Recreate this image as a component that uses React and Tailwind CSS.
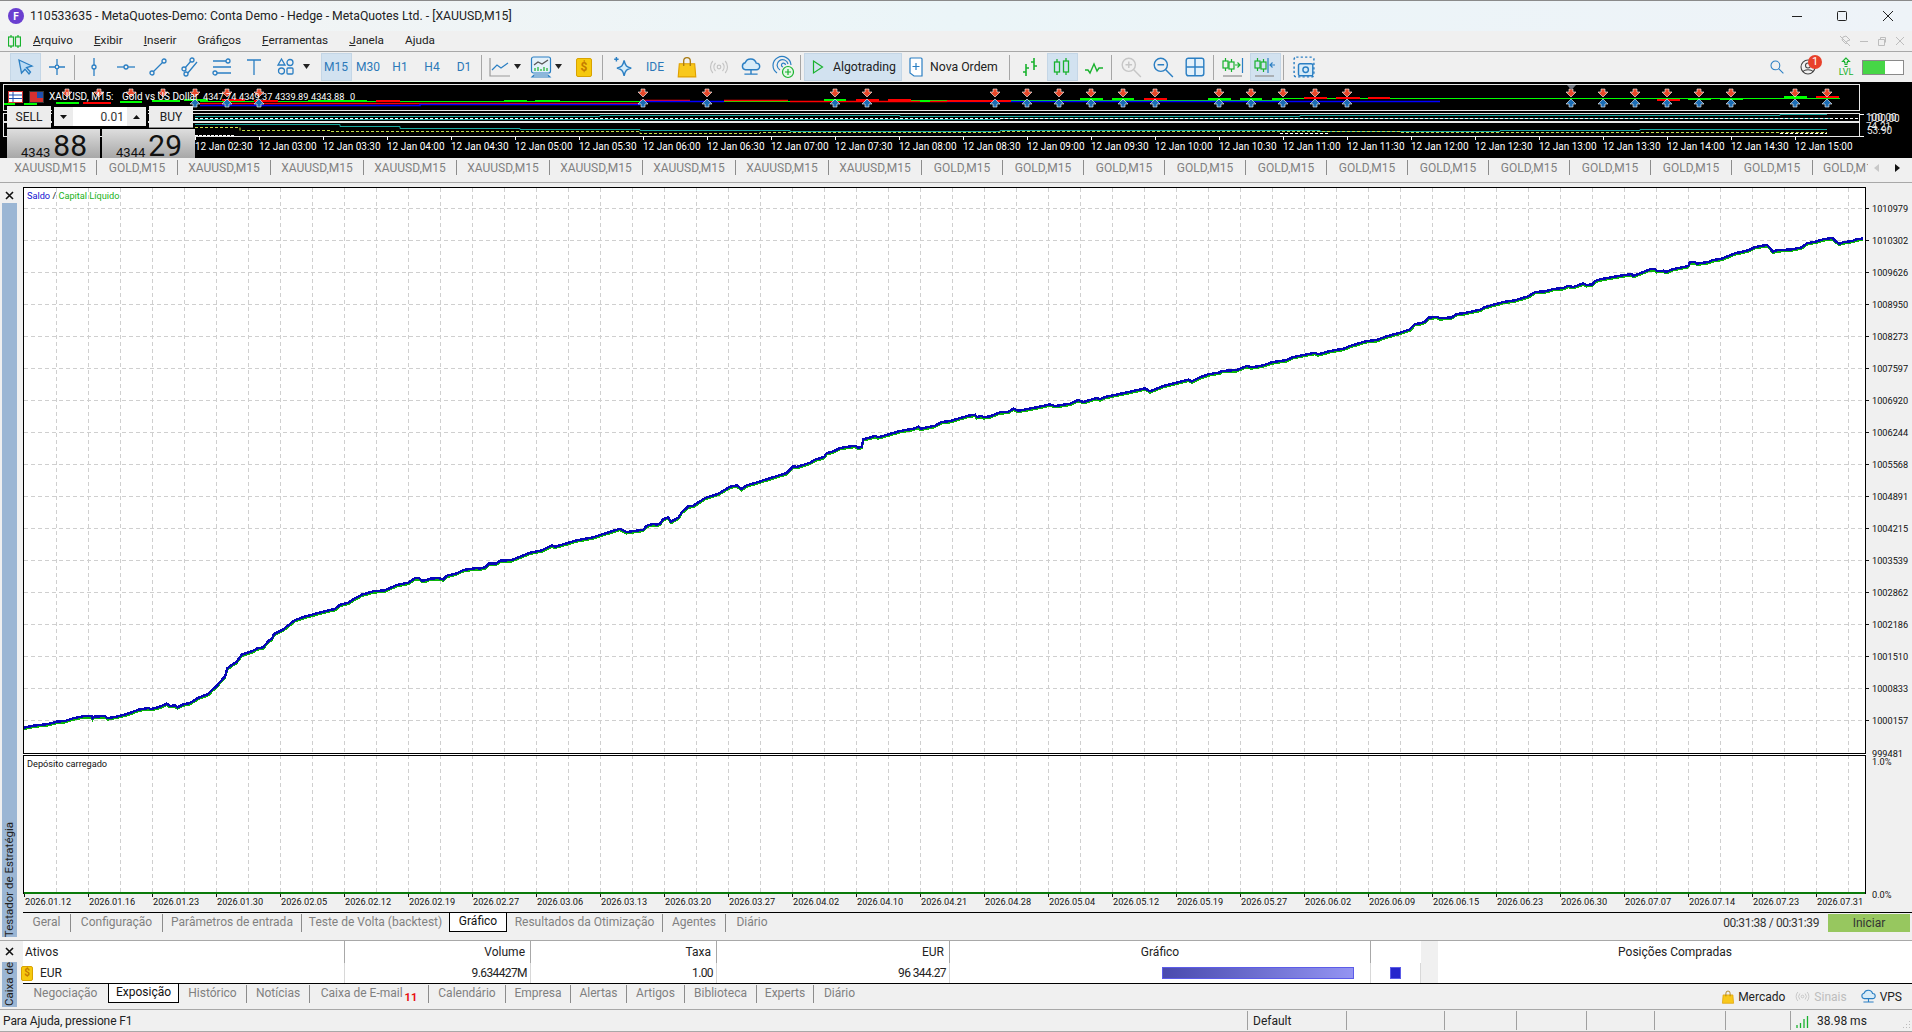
import React from 'react';

const BLUE = '#2b7fc3';
const GREEN = '#19b22e';

const Ico = ({ children, s = 20, stroke = BLUE, sw = 1.3 }) => (
  <svg width={s} height={s} viewBox="0 0 20 20" fill="none" stroke={stroke} strokeWidth={sw}>
    {children}
  </svg>
);

const Dot = ({ x, y, r = 2 }) => <circle cx={x} cy={y} r={r} fill="#f0f0f0" />;

const Caret = () => (
  <svg width="10" height="6" viewBox="0 0 10 6"><path d="M1 0h7L4.500 5z" fill="#222" /></svg>
);

const Sep = () => <div className="w-px h-[25px] bg-[#a6a6a6] mx-[1px] shrink-0" />;

const Slot = ({ active, children, w = 'w-[32px]' }) => (
  <div className={`${w} h-[28px] shrink-0 flex items-center justify-center`}>
    <div className={`h-[26px] min-w-[29px] flex items-center justify-center ${active ? 'bg-[#d2e2f0] outline outline-1 outline-[#c4d6e6]' : ''}`}>
      {children}
    </div>
  </div>
);

const DollarBadge = ({ s = 'w-[16px] h-[19px]', t = 'text-[12px]' }) => (
  <div className={`${s} ${t} rounded-[2px] bg-[#f6c90e] border border-[#d9a300] text-[#c47a00] font-bold flex items-center justify-center leading-none shrink-0`}>$</div>
);

const Bag = ({ s = 20 }) => (
  <svg width={s} height={s} viewBox="0 0 20 20">
    <path d="M3 7h14l1 12H2z" fill="#f8c81c" stroke="#e0a000" />
    <path d="M7 9V4.500a3 3 0 0 1 6 0V9" fill="none" stroke="#a87a10" strokeWidth="1.2" />
  </svg>
);

const Signal = ({ s = 20 }) => (
  <svg width={s} height={s} viewBox="0 0 20 20" fill="none" stroke="#c4c4c4" strokeWidth="1.2">
    <circle cx="10" cy="10" r="1.8" />
    <path d="M6.500 6a6 6 0 0 0 0 8M13.500 6a6 6 0 0 1 0 8M3.800 4a9 9 0 0 0 0 12M16.200 4a9 9 0 0 1 0 12" />
  </svg>
);

const Cloud = ({ s = 20 }) => (
  <Ico s={s}>
    <path d="M5 12.500a3.200 3.200 0 0 1-.3-6.300 5.300 5.300 0 0 1 10.100.3 3 3 0 0 1 .2 6z" fill="#d8ecf8" />
    <path d="M10 12.500v4M4 16.500h12" />
  </Ico>
);

const Candle = ({ x, y1, y2, b1, b2, c = GREEN }) => (
  <g stroke={c} fill="none">
    <path d={`M${x} ${y1}V${b1}M${x} ${b2}V${y2}`} />
    <rect x={x - 2.5} y={b1} width="5" height={b2 - b1} />
  </g>
);

const Scroll = ({ left }) => (
  <svg width="22" height="22" viewBox="0 0 22 22" fill="none" strokeWidth="1.2">
    {left ? (
      <>
        <Candle x={3.5} y1={2} y2={15} b1={5} b2={12} />
        <Candle x={9.5} y1={3} y2={16} b1={6} b2={13} />
        <path d="M14 2v15" stroke={BLUE} />
        <path d="M21 9h-5M18.500 6.500L16 9l2.500 2.500" stroke={BLUE} />
      </>
    ) : (
      <>
        <Candle x={3.5} y1={2} y2={15} b1={5} b2={12} />
        <Candle x={9.5} y1={3} y2={16} b1={6} b2={13} />
        <path d="M13 9h5M15.500 6.500L18 9l-2.500 2.500" stroke={GREEN} />
        <path d="M20.500 2v15" stroke={BLUE} />
      </>
    )}
    <path d="M1 20h19" stroke="#9a9a9a" strokeWidth="1.4" />
  </svg>
);

const Toolbar = () => (
  <div className="h-[31px] shrink-0 border-t border-[#a8a8a8] flex items-center pl-[9px]">
    <Slot active>
      <Ico><path d="M4 3l13 6-5.500 1.500L15.500 15 14 17l-4-4.800L6.500 16z" fill="#bcdcf4" /></Ico>
    </Slot>
    <Slot>
      <Ico><circle cx="10" cy="10" r="1.8" /><path d="M10 2v6M10 12v6M2 10h6M12 10h6" /></Ico>
    </Slot>
    <Sep />
    <div className="w-[2px] shrink-0" />
    <Slot><Ico><path d="M10 1v18" /><Dot x={10} y={10} /></Ico></Slot>
    <Slot><Ico><path d="M1 10h18" /><Dot x={10} y={10} /></Ico></Slot>
    <Slot><Ico><path d="M5 15L15 5" /><Dot x={4} y={16} /><Dot x={16} y={4} /></Ico></Slot>
    <Slot><Ico><path d="M5 11l6-7M7 17l10-12" /><Dot x={4} y={12} /><Dot x={12} y={3} /><Dot x={6} y={17} /></Ico></Slot>
    <Slot><Ico><path d="M1 4h13M1 10h18M5 16h14" /><Dot x={16} y={4} /><Dot x={3} y={16} /></Ico></Slot>
    <Slot><Ico><path d="M3 3h14M10 3v15" /></Ico></Slot>
    <Slot>
      <Ico><path d="M5.500 2l3.500 6H2z" /><circle cx="14" cy="5.500" r="3" /><circle cx="5.500" cy="14" r="3" /><rect x="11" y="11" width="6" height="6" rx="1" /></Ico>
    </Slot>
    <div className="w-[10px] shrink-0 flex justify-center"><Caret /></div>
    <div className="w-[8px] shrink-0" />
    {['M15', 'M30', 'H1', 'H4', 'D1'].map((t, i) => (
      <Slot key={t} active={i === 0}>
        <span className="text-[#2b78b8] text-[12px]">{t}</span>
      </Slot>
    ))}
    <Sep />
    <div className="w-[4px] shrink-0" />
    <div className="w-[26px] shrink-0 flex justify-center">
      <svg width="22" height="22" viewBox="0 0 22 22" fill="none" strokeWidth="1.2">
        <path d="M1 2v18h20" stroke="#9a9a9a" />
        <path d="M3 14l5-5 4 3 7-5" stroke={BLUE} />
      </svg>
    </div>
    <div className="w-[10px] shrink-0 flex justify-center"><Caret /></div>
    <div className="w-[6px] shrink-0" />
    <div className="w-[24px] shrink-0 flex justify-center">
      <svg width="22" height="24" viewBox="0 0 22 24" fill="none" strokeWidth="1.2">
        <path d="M4 20h14l2 2H2z" stroke={BLUE} />
        <rect x="1.500" y="2" width="19" height="16" rx="2" stroke={BLUE} fill="#e4f1fa" />
        <path d="M4 10l4-3 4 2 6-4" stroke="#555" />
        <path d="M5 16v-3M8 16v-4M11 16v-2M14 16v-4M17 16v-3" stroke={GREEN} />
      </svg>
    </div>
    <div className="w-[10px] shrink-0 flex justify-center ml-[1px]"><Caret /></div>
    <div className="w-[12px] shrink-0" />
    <DollarBadge />
    <div className="w-[9px] shrink-0" />
    <Sep />
    <div className="w-[3px] shrink-0" />
    <Slot>
      <Ico s={22}><path d="M11 4c1 5 2.500 6 6.500 7-4 1-5.500 2-6.500 7-1-5-2.500-6-6.500-7 4-1 5.500-2 6.500-7z" fill="#d4ecfa" /><path d="M4 1v4M2 3h4" /></Ico>
    </Slot>
    <Slot><span className="text-[#2b78b8] text-[12px]">IDE</span></Slot>
    <Slot><Bag s={22} /></Slot>
    <Slot><Signal /></Slot>
    <Slot><Cloud s={22} /></Slot>
    <Slot>
      <svg width="24" height="24" viewBox="0 0 24 24" fill="none" strokeWidth="1.2" stroke={BLUE}>
        <path d="M6 18a9 9 0 1 1 14-8M9 15a5.500 5.500 0 1 1 8-6M12 12a2 2 0 1 1 2.500-2" />
        <circle cx="17" cy="17" r="5.500" fill="#e6f8e8" stroke={GREEN} />
        <path d="M17 14v6M14 17h6" stroke={GREEN} />
      </svg>
    </Slot>
    <Sep />
    <div className="w-[3px] shrink-0" />
    <div className="w-[96px] h-[26px] shrink-0 bg-[#d2e2f0] outline outline-1 outline-[#c4d6e6] flex items-center pl-[7px] gap-[9px] text-[12.25px] text-[#222]">
      <svg width="12" height="16" viewBox="0 0 12 16" fill="none" stroke={GREEN} strokeWidth="1.2"><path d="M1.500 2l9 6-9 6z" /></svg>
      <span>Algotrading</span>
    </div>
    <div className="w-[8px] shrink-0" />
    <div className="w-[99px] h-[26px] shrink-0 flex items-center gap-[7px] text-[12.25px] text-[#222]">
      <svg width="14" height="20" viewBox="0 0 14 20" fill="#fff" stroke={BLUE} strokeWidth="1.2"><path d="M2 1h10a1 1 0 0 1 1 1v17H5l-4-3V2a1 1 0 0 1 1-1z" /><path d="M7 6v7M3.500 9.500h7" /></svg>
      <span>Nova Ordem</span>
    </div>
    <Sep />
    <div className="w-[3px] shrink-0" />
    <Slot>
      <Ico stroke={GREEN} sw={1.6}><path d="M6 7v12M3 15h3M6 11h3M14 1v12M11 5h3M14 9h3" /></Ico>
    </Slot>
    <Slot active>
      <svg width="20" height="20" viewBox="0 0 20 20" strokeWidth="1.3"><Candle x={5} y1={2} y2={18} b1={5} b2={15} /><Candle x={14} y1={1} y2={18} b1={4} b2={15} /></svg>
    </Slot>
    <Slot><Ico stroke={GREEN} sw={1.4}><path d="M1 13h3l2 3 4-9 3 7 2-3h4" /></Ico></Slot>
    <Sep />
    <div className="w-[2px] shrink-0" />
    <Slot><Ico stroke="#c6c6c6" s={22}><circle cx="8" cy="8" r="6" /><path d="M12.500 12.500L19 19M5 8h6M8 5v6" /></Ico></Slot>
    <Slot><Ico s={22}><circle cx="8" cy="8" r="6" /><path d="M12.500 12.500L19 19M5 8h6" /></Ico></Slot>
    <Slot><Ico s={22}><rect x="2" y="2" width="16" height="16" rx="2" fill="#e4f1fa" /><path d="M10 2v16M2 10h16" /></Ico></Slot>
    <div className="w-px shrink-0" />
    <Sep />
    <div className="w-[2px] shrink-0" />
    <Slot><Scroll /></Slot>
    <Slot active><Scroll left /></Slot>
    <div className="w-px shrink-0" />
    <Sep />
    <div className="w-[3px] shrink-0" />
    <Slot>
      <Ico s={22}>
        <rect x="1" y="1" width="18" height="18" rx="2" strokeDasharray="2 2" />
        <rect x="5" y="7" width="13" height="11" rx="1.500" fill="#d8ecf8" />
        <circle cx="11.500" cy="12.500" r="2.500" />
      </Ico>
    </Slot>
    <div className="flex-1" />
    <div className="w-[22px] flex justify-center">
      <Ico s={16}><circle cx="8" cy="8" r="5.500" /><path d="M12 12l6 6" /></Ico>
    </div>
    <div className="w-[9px]" />
    <div className="w-[22px] h-[28px] relative flex items-center justify-center">
      <svg width="16" height="16" viewBox="0 0 16 16" fill="none" stroke="#444" strokeWidth="1.1"><circle cx="8" cy="8" r="7" /><circle cx="8" cy="6.500" r="2.500" /><path d="M3 13c1-3 9-3 10 0" /></svg>
      <span className="absolute left-[11px] top-[2px] w-[14px] h-[14px] rounded-full bg-[#e8402a] text-white text-[11px] leading-[14px] text-center">1</span>
    </div>
    <div className="w-[19px]" />
    <div className="w-[16px] flex flex-col items-center leading-none">
      <svg width="10" height="10" viewBox="0 0 10 10" fill="none" stroke={GREEN} strokeWidth="1.1"><path d="M5 1L1.500 4.500H3.500V6H6.500V4.500H8.500zM3.500 7.500h3M3.500 9.500h3" /></svg>
      <span className="text-[9px] text-[#19b22e] leading-[10px]">LVL</span>
    </div>
    <div className="w-[8px]" />
    <div className="w-[42px] h-[15px] border border-[#8a8a8a] bg-white flex mr-[8px]">
      <div className="w-[22px] bg-[#46d646]" />
    </div>
  </div>
);

const stripTimes = ['02:30','03:00','03:30','04:00','04:30','05:00','05:30','06:00','06:30','07:00','07:30','08:00','08:30','09:00','09:30','10:00','10:30','11:00','11:30','12:00','12:30','13:00','13:30','14:00','14:30','15:00'];
const marks = [67,99,131,163,195,227,259,643,707,835,867,995,1027,1059,1091,1123,1155,1219,1251,1283,1315,1347,1571,1603,1635,1667,1699,1731,1795,1827];
const greenBars = [[4,11,103],[24,13,103],[56,23,102],[120,22,101],[152,28,100],[184,24,99],[308,59,100],[504,23,100],[535,25,100],[824,22,99],[920,10,100],[1080,23,98],[1112,22,98],[1208,23,98],[1240,22,98],[1272,10,98],[1688,23,98],[1720,23,98],[1784,23,96]];
const redBars = [[83,28,102],[222,23,99],[254,24,100],[376,24,100],[856,23,99],[888,23,99],[947,64,100],[1144,23,98],[1304,23,97],[1336,24,97],[1368,22,97],[1657,23,99],[1816,23,96]];
const ohlc = [['4347.74', 203], ['4349.37', 239], ['4339.89', 275], ['4343.88', 311], ['0', 350]];

const Strip = () => (
  <div className="h-[76px] shrink-0 bg-black relative overflow-hidden">
    <svg width="1912" height="76" viewBox="0 82 1912 76" className="block" style={{ fontFamily: 'Roboto, sans-serif' }}>
      <rect x="3.500" y="84.500" width="1856" height="26" fill="none" stroke="#e8e8e8" />
      <rect x="3.500" y="113.500" width="1856" height="8" fill="none" stroke="#e8e8e8" />
      <rect x="3.500" y="122.500" width="1856" height="14" fill="none" stroke="#e8e8e8" />
      <path d="M200 101.500H900V100.500H1280V98.500H1840" stroke="#00ff00" fill="none" />
      <path d="M200 103.500H640M640 100.500H690M724 100.500H788M790 101.500H947" stroke="#ff0000" fill="none" strokeWidth="1.500" />
      <path d="M200 105.500H420V104.500H640M640 101.500H724M947 101.500H1440" stroke="#0000ff" fill="none" strokeWidth="1.500" />
      {greenBars.map(([x, w, y]) => <rect key={x} x={x} y={y} width={w} height="2" fill="#00ff00" />)}
      {redBars.map(([x, w, y]) => <rect key={x} x={x} y={y} width={w} height="2" fill="#ff0000" />)}
      <path d="M195 116.500H600V115.500H900V116.500H1300V115.500H1780V114.500H1827" stroke="#19a8a0" fill="none" />
      <path d="M195 119.500H1000V118.500H1830" stroke="#19a8a0" fill="none" />
      <path d="M195 118.500H1858" stroke="#fff" fill="none" strokeDasharray="3 2" />
      <path d="M195 124.500H340V126.500H400V128.500H520V129.500H640V130.500H790V131.500H1000V130.500H1320V131.500H1500V130.500H1640V129.500H1827" stroke="#19a8a0" fill="none" />
      <path d="M195 127.500H240V130.500H330V131.500H640V133.500H760V132.500H1000V131.500H1400V132.500H1827" stroke="#c8e04a" fill="none" strokeDasharray="3 2" />
      <path d="M195 135.500H235" stroke="#fff" fill="none" strokeDasharray="3 1" />
      <path d="M1280 133.500H1330M1780 133.500H1827" stroke="#fff" fill="none" strokeDasharray="3 2" />
      {marks.map((x) => (
        <path key={x} d={`M${x - 2} 89h4v3h3l-5 5-5-5h3z`} fill="#e8482a" stroke="#fff" strokeWidth="0.6" />
      ))}
      {marks.filter((x) => x >= 195).map((x) => (
        <path key={x} d={`M${x} 99l5 5h-3v3h-4v-3h-3z`} fill="#1c6db4" stroke="#fff" strokeWidth="0.6" />
      ))}
      <path d="M1567 85h9l-4.500 5z" fill="#707680" />
      {stripTimes.map((t, i) => (
        <g key={t}>
          <path d={`M${195.500 + 64 * i} 137v3`} stroke="#fff" />
          <text x={195 + 64 * i} y="150" fontSize="10" fill="#fff">12 Jan {t}</text>
        </g>
      ))}
      <path d="M1860 114.500h4M1860 136.500h4" stroke="#fff" />
      <text x="1866" y="121" fontSize="10" fill="#e8e8e8">100.00</text>
      <text x="1869" y="122" fontSize="10" fill="#e8e8e8">100.00</text>
      <text x="1866" y="130" fontSize="10" fill="#e8e8e8">74.21</text>
      <text x="1867" y="134" fontSize="10" fill="#e8e8e8">53.90</text>
      <text x="49" y="100" fontSize="10" fill="#fff">XAUUSD, M15:</text>
      <text x="122" y="100" fontSize="10" fill="#fff">Gold vs US Dollar</text>
      {ohlc.map(([t, x]) => <text key={t} x={x} y="100" fontSize="9.200" fill="#fff">{t}</text>)}
      <rect x="8.500" y="91.500" width="14" height="11" fill="#fff" stroke="#d03030" />
      <path d="M9 95h13M9 98.500h13M13 92v10" stroke="#2050b0" />
      <rect x="29.500" y="91.500" width="14" height="11" fill="#d83030" stroke="#333" />
      <rect x="37" y="92" width="6" height="6" fill="#2050b0" />
    </svg>
    <div className="absolute left-[6px] top-[23px] w-[189px] h-[53px]">
      <div className="flex h-[24px]">
        <div className="w-[44px] h-[22px] mt-[1px] ml-[1px] bg-[#ececec] border-b border-[#8a8a8a] text-[12px] text-[#222] flex items-center justify-center">SELL</div>
        <div className="w-[96px] h-[23px] ml-[1px] bg-white border-[2px] border-black flex items-center text-[12px] text-[#333]">
          <div className="w-[19px] h-full bg-[#ececec] flex items-center justify-center">
            <svg width="7" height="4" viewBox="0 0 7 4"><path d="M0 0h7L3.500 4z" fill="#111" /></svg>
          </div>
          <div className="flex-1 text-right pr-[3px]">0.01</div>
          <div className="w-[19px] h-full bg-[#ececec] flex items-center justify-center">
            <svg width="7" height="4" viewBox="0 0 7 4"><path d="M0 4h7L3.500 0z" fill="#111" /></svg>
          </div>
        </div>
        <div className="w-[44px] h-[22px] mt-[1px] ml-[1px] bg-[#ececec] border-b border-[#8a8a8a] text-[12px] text-[#222] flex items-center justify-center">BUY</div>
      </div>
      <div className="flex gap-[2px] ml-[1px] h-[29px]">
        {[['4343', '88'], ['4344', '29']].map(([a, b]) => (
          <div key={a} className="w-[93px] h-[29px] bg-gradient-to-b from-[#dedede] to-[#a8a8a8] overflow-hidden flex items-end justify-end pr-[13px] gap-[3px] text-[#111]">
            <span className="text-[13px] leading-[16px] mb-[-3px]">{a}</span>
            <span className="text-[30px] leading-[30px] mb-[-3px]">{b}</span>
          </div>
        ))}
      </div>
    </div>
  </div>
);

const chartTabs = [
  ['XAUUSD,M15', 'w-[97px] pl-[4px]'],
  ['GOLD,M15', 'w-[81px]'],
  ...Array.from({ length: 8 }, () => ['XAUUSD,M15', 'w-[93px]']),
  ...Array.from({ length: 11 }, () => ['GOLD,M15', 'w-[81px]']),
];

const ChartTabs = () => (
  <div className="h-[24px] shrink-0 flex items-start pt-[2px] relative overflow-hidden text-[#808080] text-[12px] whitespace-nowrap">
    <div className="flex items-center w-[1868px] overflow-hidden shrink-0">
      {chartTabs.map(([t, w], i) => (
        <div key={i} className={`${w} h-[15px] shrink-0 border-r border-[#8c8c8c] flex items-center justify-center leading-none`}>{t}</div>
      ))}
      <div className="shrink-0 pl-[10px] leading-none">GOLD,M15</div>
    </div>
    <div className="flex-1 h-[15px] flex justify-end gap-[16px] pr-[12px] items-center">
      <svg width="5" height="8" viewBox="0 0 5 8"><path d="M5 0v8L0 4z" fill="#c8c8c8" /></svg>
      <svg width="5" height="8" viewBox="0 0 5 8"><path d="M0 0v8l5-4z" fill="#111" /></svg>
    </div>
  </div>
);

const yLabels = [1010979,1010302,1009626,1008950,1008273,1007597,1006920,1006244,1005568,1004891,1004215,1003539,1002862,1002186,1001510,1000833,1000157];
const dates = ['01.12','01.16','01.23','01.30','02.05','02.12','02.19','02.27','03.06','03.13','03.20','03.27','04.02','04.10','04.21','04.28','05.04','05.12','05.19','05.27','06.02','06.09','06.15','06.23','06.30','07.07','07.14','07.23','07.31'];

// points read off the reference in four overlapping crops, each with its own origin
const seg = (ox, oy, pts) => pts.map(([x, y]) => [ox + x / 3, oy + y / 3]);
const curve = [
  ...seg(20, 460, [[12,803],[40,797],[85,792],[110,785],[135,783],[160,775],[190,769],[215,768],[218,775],[222,770],[255,768],[262,775],[295,769],[330,759],[355,749],[385,744],[392,747],[415,742],[440,731],[450,738],[465,736],[472,742],[490,733],[510,729],[535,713],[565,702],[578,688],[590,678],[605,660],[615,650],[622,625],[635,615],[650,605],[665,584],[700,572],[712,565],[730,562],[745,543],[755,537],[762,522],[790,508],[825,480],[860,468],[880,463],[920,452],[945,447],[960,434],[985,428],[1000,418],[1025,404],[1060,394],[1095,391],[1130,375],[1165,368],[1185,355],[1197,354],[1205,362],[1220,360],[1230,356],[1255,354],[1270,358],[1280,347],[1310,340],[1330,330],[1370,324],[1378,326],[1395,322],[1408,310],[1430,310]]),
  ...seg(500, 340, [[0,662],[35,660],[60,650],[90,638],[125,631],[155,616],[165,620],[230,601],[280,592],[300,585],[360,566],[380,576],[430,569],[440,557],[460,552],[470,554],[480,551],[490,537],[505,532],[513,545],[535,533],[545,517],[565,499],[580,497],[615,474],[655,461],[690,440],[710,436],[725,447],[740,436],[775,426],[790,421],[860,399],[880,378],[890,381],[930,368],[945,359],[972,351],[980,339],[1000,334],[1020,324],[1045,320],[1065,317],[1075,323],[1085,320],[1090,298],[1125,288],[1135,292],[1200,273],[1240,266],[1255,260],[1262,266],[1305,257],[1325,246],[1350,243],[1405,227],[1425,224],[1430,231],[1445,228],[1450,232],[1470,229]]),
  ...seg(1000, 260, [[0,457],[25,455],[40,446],[55,452],[110,442],[150,433],[165,438],[210,431],[235,420],[250,426],[290,414],[300,418],[315,411],[400,393],[435,385],[450,394],[490,378],[565,359],[575,364],[600,352],[625,343],[660,337],[665,333],[710,330],[740,318],[755,322],[790,316],[815,307],[860,300],[880,291],[945,278],[955,283],[990,273],[1030,266],[1050,258],[1100,243],[1130,240],[1160,229],[1200,218],[1230,208],[1245,192]]),
  ...seg(1420, 200, [[0,370],[15,365],[25,353],[50,350],[60,355],[95,352],[110,342],[130,340],[180,329],[195,321],[250,306],[285,301],[325,289],[345,276],[375,274],[400,267],[430,264],[445,257],[460,261],[490,250],[500,255],[518,253],[525,243],[540,238],[590,229],[635,222],[640,228],[690,208],[705,207],[710,213],[730,212],[738,216],[760,207],[805,198],[810,186],[825,186],[830,191],[865,186],[875,181],[905,176],[945,160],[985,151],[1005,141],[1040,135],[1050,143],[1058,155],[1070,151],[1115,148],[1145,142],[1160,130],[1190,124],[1210,118],[1237,114],[1245,122],[1258,131],[1270,127],[1300,122],[1310,118],[1330,115]]),
];
const curveStr = curve.map(([x, y]) => `${x.toFixed(1)},${y.toFixed(1)}`).join(' ');
const curveLow = curve.map(([x, y]) => `${x.toFixed(1)},${(y + 1.5).toFixed(1)}`).join(' ');

const TesterChart = () => (
  <svg width="1889" height="725" viewBox="23 187 1889 725" className="block shrink-0 bg-[#f0f0f0]" style={{ fontFamily: 'Roboto, sans-serif' }}>
    <rect x="23" y="187" width="1843" height="707" fill="#fff" />
    {Array.from({ length: 57 }, (_, i) => (
      <path key={i} d={`M${56.500 + 32 * i} 188V893`} stroke="#cfcfcf" strokeDasharray="4 3" fill="none" />
    ))}
    {yLabels.map((v, i) => (
      <g key={v}>
        <path d={`M24 ${208.500 + 32 * i}H1866`} stroke="#cfcfcf" strokeDasharray="4 3" fill="none" />
        <path d={`M1866 ${208.500 + 32 * i}h3`} stroke="#111" />
        <text x="1872" y={212 + 32 * i} fontSize="9.200" fill="#111">{v}</text>
      </g>
    ))}
    <rect x="23.500" y="187.500" width="1842" height="566" fill="none" stroke="#000" />
    <rect x="23.500" y="755.500" width="1842" height="138" fill="none" stroke="#000" />
    <rect x="24" y="754" width="1842" height="1" fill="#fff" />
    <path d="M24 893H1865" stroke="#0a7a0a" strokeWidth="2" />
    <polyline points={curveLow} fill="none" stroke="#0cb40c" strokeWidth="2" shapeRendering="crispEdges" />
    <polyline points={curveStr} fill="none" stroke="#0808b8" strokeWidth="2.400" shapeRendering="crispEdges" />
    <text x="27" y="199" fontSize="9.200"><tspan fill="#1010d0">Saldo</tspan><tspan fill="#111"> / </tspan><tspan fill="#19b219">Capital Líquido</tspan></text>
    <text x="27" y="767" fontSize="9.200" fill="#111">Depósito carregado</text>
    <text x="1872" y="757" fontSize="9.200" fill="#111">999481</text>
    <text x="1872" y="765" fontSize="9.200" fill="#111">1.0%</text>
    <text x="1872" y="898" fontSize="9.200" fill="#111">0.0%</text>
    {dates.map((d, i) => (
      <g key={d}>
        <path d={`M${24.500 + 64 * i} 894v3`} stroke="#111" />
        <text x={25 + 64 * i} y="905" fontSize="9.200" fill="#111">2026.{d}</text>
      </g>
    ))}
  </svg>
);

const testerTabs = [['Geral','w-[48px]'],['Configuração','w-[92px]'],['Parâmetros de entrada','w-[139px]'],['Teste de Volta (backtest)','w-[147px]'],['Gráfico','w-[58px]'],['Resultados da Otimização','w-[156px]'],['Agentes','w-[63px]'],['Diário','w-[52px]']];
const boxTabs = [['Negociação','w-[85px]'],['Exposição','w-[71px]'],['Histórico','w-[68px]'],['Notícias','w-[63px]'],['Caixa de E-mail','w-[119px]'],['Calendário','w-[77px]'],['Empresa','w-[65px]'],['Alertas','w-[56px]'],['Artigos','w-[58px]'],['Biblioteca','w-[72px]'],['Experts','w-[57px]'],['Diário','w-[51px]']];

const TabRow = ({ items, active, pad }) => (
  <div className="flex items-start text-[12px] text-[#808080] whitespace-nowrap">
    {items.map(([t, w], i) => {
      const isActive = t === active;
      const beforeActive = items[i + 1] && items[i + 1][0] === active;
      return (
        <div
          key={t + i}
          className={`${w} ${pad} h-[18px] shrink-0 flex items-center leading-none ${
            isActive
              ? 'bg-white text-[#111] border-x border-b border-black justify-center !h-[19px]'
              : beforeActive || i === items.length - 1
                ? 'justify-center mt-[1px]'
                : 'justify-center border-r border-[#8c8c8c] mt-[1px]'
          }`}
        >
          {t === 'Caixa de E-mail' ? (
            <span className="flex items-end">
              Caixa de E-mail<span className="text-[#e81010] text-[11px] leading-none ml-[2px] translate-y-[4px] font-bold">11</span>
            </span>
          ) : t}
        </div>
      );
    })}
  </div>
);

const Tester = () => (
  <div className="h-[753px] shrink-0 flex">
    <div className="w-[23px] shrink-0 flex flex-col">
      <div className="h-[16px] flex items-center justify-center pr-[5px] pt-[1px]">
        <svg width="9" height="9" viewBox="0 0 9 9" stroke="#111" strokeWidth="1.6"><path d="M1 1l7 7M8 1L1 8" /></svg>
      </div>
      <div className="w-[15px] ml-[2px] h-[734px] bg-[#9bb6d4] flex flex-col justify-end items-center overflow-hidden">
        <span className="[writing-mode:vertical-rl] rotate-180 text-[11.5px] leading-none text-[#222] pb-[12px] whitespace-nowrap">Testador de Estratégia</span>
      </div>
    </div>
    <div className="flex-1 min-w-0 flex flex-col">
      <TesterChart />
      <div className="h-[28px] border-t border-black flex items-start relative">
        <TabRow items={testerTabs} active="Gráfico" pad="pb-[3px]" />
        <div className="flex-1" />
        <span className="text-[12px] tracking-[-0.4px] text-[#333] mt-[4px] mr-[9px] leading-none">00:31:38 / 00:31:39</span>
        <div className="w-[82px] h-[18px] mt-[1px] mr-[2px] bg-[#97c75f] text-[12px] text-[#333] flex items-center justify-center leading-none">Iniciar</div>
      </div>
    </div>
  </div>
);

const Exposure = () => (
  <div className="h-[69px] shrink-0 border-t border-[#a8a8a8] flex">
    <div className="w-[23px] shrink-0 flex flex-col">
      <div className="h-[21px] flex items-center justify-center pr-[5px]">
        <svg width="9" height="9" viewBox="0 0 9 9" stroke="#111" strokeWidth="1.6"><path d="M1 1l7 7M8 1L1 8" /></svg>
      </div>
      <div className="w-[15px] ml-[2px] h-[45px] bg-[#9bb6d4] flex justify-center items-start overflow-hidden">
        <span className="[writing-mode:vertical-rl] rotate-180 text-[11.5px] leading-none text-[#222] whitespace-nowrap">Caixa de</span>
      </div>
    </div>
    <div className="flex-1 min-w-0 flex flex-col">
      <div className="h-[43px] bg-white border-b border-black grid grid-cols-[322px_186px_186px_233px_421px_50px_17px_1fr] grid-rows-[22px_20px] text-[12px] text-[#222]">
        <div className="border-r border-[#a8a8a8] flex items-center pl-[2px]">Ativos</div>
        <div className="border-r border-[#a8a8a8] flex items-center justify-end pr-[5px]">Volume</div>
        <div className="border-r border-[#a8a8a8] flex items-center justify-end pr-[5px]">Taxa</div>
        <div className="border-r border-[#a8a8a8] flex items-center justify-end pr-[5px]">EUR</div>
        <div className="border-r border-[#a8a8a8] flex items-center justify-center">Gráfico</div>
        <div />
        <div className="bg-[#f0f0f0] row-span-2" />
        <div className="flex items-center justify-center">Posições Compradas</div>
        <div className="border-r border-[#d8d8d8] flex items-center gap-[7px]">
          <div className="-ml-[2px]"><DollarBadge s="w-[12px] h-[15px]" t="text-[10px]" /></div>EUR
        </div>
        <div className="border-r border-[#d8d8d8] flex items-center justify-end pr-[3px] tracking-[-0.6px]">9.634427M</div>
        <div className="border-r border-[#d8d8d8] flex items-center justify-end pr-[3px] tracking-[-0.6px]">1.00</div>
        <div className="border-r border-[#d8d8d8] flex items-center justify-end pr-[3px] tracking-[-0.6px]">96 344.27</div>
        <div className="border-r border-[#d8d8d8] flex items-center pl-[212px]">
          <div className="w-[192px] h-[12px] border border-[#5c5ce8] bg-gradient-to-r from-[#4a4aae] to-[#9494f2]" />
        </div>
        <div className="flex items-center justify-center border-r border-[#d8d8d8]">
          <div className="w-[11px] h-[12px] border border-[#5c5ce8] bg-[#2626cc]" />
        </div>
        <div />
      </div>
      <div className="h-[25px] flex items-start">
        <TabRow items={boxTabs} active="Exposição" pad="pb-[2px]" />
        <div className="flex-1" />
        <div className="flex items-center h-[25px] text-[12px] text-[#222] pr-[10px] whitespace-nowrap">
          <Bag s={14} />
          <span className="ml-[3px] mr-[10px]">Mercado</span>
          <Signal s={15} />
          <span className="ml-[4px] mr-[13px] text-[#bdbdbd]">Sinais</span>
          <Cloud s={17} />
          <span className="ml-[3px]">VPS</span>
        </div>
      </div>
    </div>
  </div>
);

const statusCells = ['w-[99px]','w-[98px]','w-[72px]','w-[70px]','w-[68px]','w-[71px]','w-[65px]'];

const StatusBar = () => (
  <div className="h-[23px] shrink-0 border-t border-b border-[#a8a8a8] flex items-center text-[12px] text-[#222]">
    <div className="w-[1247px] pl-[3px] tracking-[-0.1px]">Para Ajuda, pressione F1</div>
    {statusCells.map((w, i) => (
      <div key={w + i} className={`${w} h-[19px] border-l border-[#a0a0a0] pl-[5px] flex items-center`}>{i === 0 ? 'Default' : ''}</div>
    ))}
    <div className="flex-1 h-[19px] border-l border-[#a0a0a0] pl-[5px] flex items-center relative">
      <svg width="15" height="14" viewBox="0 0 15 14" stroke={GREEN} strokeWidth="1.300"><path d="M1 14v-3M4.500 14V9M8 14V5M11.500 14V2" /></svg>
      <span className="ml-[6px]">38.98 ms</span>
      <svg className="absolute right-[1px] bottom-0" width="10" height="10" viewBox="0 0 10 10" fill="#bbb"><path d="M8 1h1v1H8zM5 4h1v1H5zM8 4h1v1H8zM2 7h1v1H2zM5 7h1v1H5zM8 7h1v1H8z" /></svg>
    </div>
  </div>
);

export default function App() {
  return (
    <div className="w-[1912px] h-[1032px] overflow-hidden flex flex-col bg-[#f0f0f0] font-['Roboto',sans-serif] text-[#222]">
      <div className="h-[31px] shrink-0 border-t border-[#8a8a8a] bg-gradient-to-r from-[#f3f4f4] via-[#ebf5f8] to-[#eef3f8] flex items-center pl-[8px] relative">
        <div className="w-[16px] h-[16px] rounded-full bg-[#6a3fd0] text-white text-[10px] font-bold flex items-center justify-center">F</div>
        <span className="ml-[6px] text-[12.25px] leading-none text-[#222]">110533635 - MetaQuotes-Demo: Conta Demo - Hedge - MetaQuotes Ltd. - [XAUUSD,M15]</span>
        <div className="flex-1" />
        <div className="flex items-center gap-[33px] pr-[17px]">
          <svg width="12" height="12" viewBox="0 0 12 12" stroke="#222"><path d="M1 6.500h10" /></svg>
          <svg width="12" height="12" viewBox="0 0 12 12" stroke="#222" fill="none"><rect x="1.500" y="1.500" width="9" height="9" rx="1" /></svg>
          <svg width="14" height="14" viewBox="0 0 14 14" stroke="#222"><path d="M2 2l10 10M12 2L2 12" /></svg>
        </div>
      </div>
      <div className="h-[20px] shrink-0 flex items-center pl-[8px] text-[11.75px] text-[#222]">
        <svg width="13" height="15" viewBox="0 0 13 15" className="mr-[12px]" strokeWidth="1.200"><Candle x={3} y1={1} y2={14} b1={3} b2={12} /><Candle x={10} y1={1} y2={14} b1={3} b2={12} /></svg>
        <div className="flex gap-[21px] leading-none">
          <span><u>A</u>rquivo</span>
          <span><u>E</u>xibir</span>
          <span><u>I</u>nserir</span>
          <span>Gráfi<u>c</u>os</span>
          <span><u>F</u>erramentas</span>
          <span><u>J</u>anela</span>
          <span>A<u>j</u>uda</span>
        </div>
        <div className="flex-1" />
        <div className="flex items-center gap-[8px] pr-[7px]">
          <svg width="12" height="12" viewBox="0 0 12 12" stroke="#bdbdbd" fill="none"><path d="M1 1l10 10M7 1l4 4-3 1-1 3-4-4 1-3z" /></svg>
          <svg width="10" height="10" viewBox="0 0 10 10" stroke="#bdbdbd"><path d="M1 5.500h8" /></svg>
          <svg width="10" height="10" viewBox="0 0 10 10" stroke="#bdbdbd" fill="none"><path d="M1.500 3.500h6v6h-6zM3.500 3.500v-2h5v5" /></svg>
          <svg width="10" height="10" viewBox="0 0 10 10" stroke="#bdbdbd"><path d="M1 1l8 8M9 1L1 9" /></svg>
        </div>
      </div>
      <Toolbar />
      <Strip />
      <ChartTabs />
      <div className="h-[5px] shrink-0 border-t border-[#a8a8a8]" />
      <Tester />
      <Exposure />
      <StatusBar />
    </div>
  );
}
